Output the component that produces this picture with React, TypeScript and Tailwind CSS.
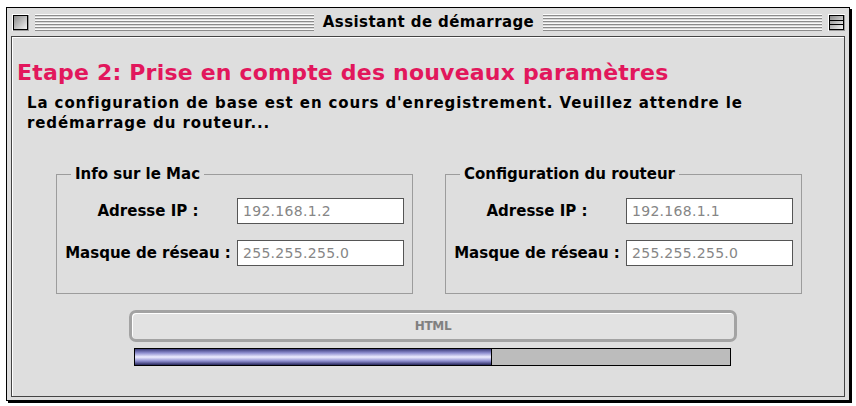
import React from "react";

const ui = "font-['DejaVu_Sans',_'Noto_Sans',_sans-serif]";

// case fermeture / zoom de la barre de titre
function TitleBox({ zoom = false }: { zoom?: boolean }) {
  return (
    <div className="w-[17px] h-[17px] bg-[#dddddd] p-[1px] shadow-[inset_1px_1px_0_#fff,inset_-1px_-1px_0_#999]">
      <div className="relative w-full h-full border border-black bg-[linear-gradient(135deg,#8a8a8a,#f2f2f2)]">
        {zoom && (
          <>
            <div className="absolute left-0 right-0 top-[4px] h-[1px] bg-black" />
            <div className="absolute left-0 right-0 top-[8px] h-[1px] bg-black" />
          </>
        )}
      </div>
    </div>
  );
}

function Stripes() {
  return (
    <div className="flex-1 h-[17px] bg-[image:repeating-linear-gradient(to_bottom,#fafafa_0px,#fafafa_1px,#8c8c8c_1px,#8c8c8c_2px,#d8d8d8_2px,#d8d8d8_3px)]" />
  );
}

function Field({ label, value }: { label: string; value: string }) {
  return (
    <div className="flex items-center">
      <div className="w-[178px] text-center text-[15px] font-bold text-black">{label}</div>
      <div className="w-[167px] h-[26px] bg-white border border-[#555] flex items-center pl-[5px] text-[14px] tracking-[0.3px] text-[#868686]">
        {value}
      </div>
    </div>
  );
}

function Group({ title, ip }: { title: string; ip: string }) {
  return (
    <fieldset className="w-[357px] h-[128px] border border-[#9c9c9c] pt-[16px] pl-[2px] flex flex-col gap-[16px]">
      <legend className="ml-[12px] px-[4px] text-[15px] font-bold text-black leading-[16px]">{title}</legend>
      <Field label="Adresse IP :" value={ip} />
      <Field label="Masque de réseau :" value="255.255.255.0" />
    </fieldset>
  );
}

export default function App() {
  const progress = 60;

  return (
    <div className={`w-[856px] h-[406px] bg-white pt-[7px] pl-[6px] ${ui}`}>
      {/* fenêtre */}
      <div className="w-[844px] h-[394px] border border-black bg-[#dddddd] shadow-[2px_2px_0_#000] flex flex-col px-[4px] pb-[3px]">
        {/* barre de titre */}
        <div className="h-[28px] flex items-center gap-[6px] pl-[1px]">
          <TitleBox />
          <Stripes />
          <div className="px-[3px] text-[15px] font-bold text-black leading-none tracking-[0.4px]">Assistant de démarrage</div>
          <Stripes />
          <TitleBox zoom />
        </div>

        {/* contenu */}
        <div className="flex-1 border border-[#444] bg-[#dedede] shadow-[inset_1px_1px_0_#fff] flex flex-col">
          <h1 className="mt-[23px] ml-[5px] text-[22px] font-bold text-[#e2175c] leading-[26px] tracking-[0.2px]">
            Etape 2: Prise en compte des nouveaux paramètres
          </h1>
          <p className="mt-[7px] ml-[15px] w-[740px] text-[15px] font-bold text-black leading-[20px] tracking-[0.9px]">
            La configuration de base est en cours d'enregistrement. Veuillez attendre le redémarrage du routeur...
          </p>

          <div className="mt-[33px] flex gap-[32px] pl-[44px]">
            <Group title="Info sur le Mac" ip="192.168.1.2" />
            <Group title="Configuration du routeur" ip="192.168.1.1" />
          </div>

          {/* statut */}
          <div className="mt-[16px] ml-[117px] w-[608px] h-[32px] rounded-[7px] border-[3px] border-[#a3a3a3] bg-[#e2e2e2] shadow-[inset_1px_1px_0_#fff] flex items-center justify-center">
            <span className="text-[12px] font-bold text-[#808080] tracking-[-0.3px]">HTML</span>
          </div>
          <div className="mt-[6px] ml-[122px] w-[597px] h-[18px] border border-black bg-[#bcbcbc] flex">
            <div
              className="h-full border-r border-black bg-[linear-gradient(to_bottom,#3a3a78_0%,#8f8fd0_25%,#eeeeff_50%,#8f8fd0_75%,#26265a_100%)]"
              style={{ width: `${progress}%` }}
            />
          </div>
        </div>
      </div>
    </div>
  );
}
